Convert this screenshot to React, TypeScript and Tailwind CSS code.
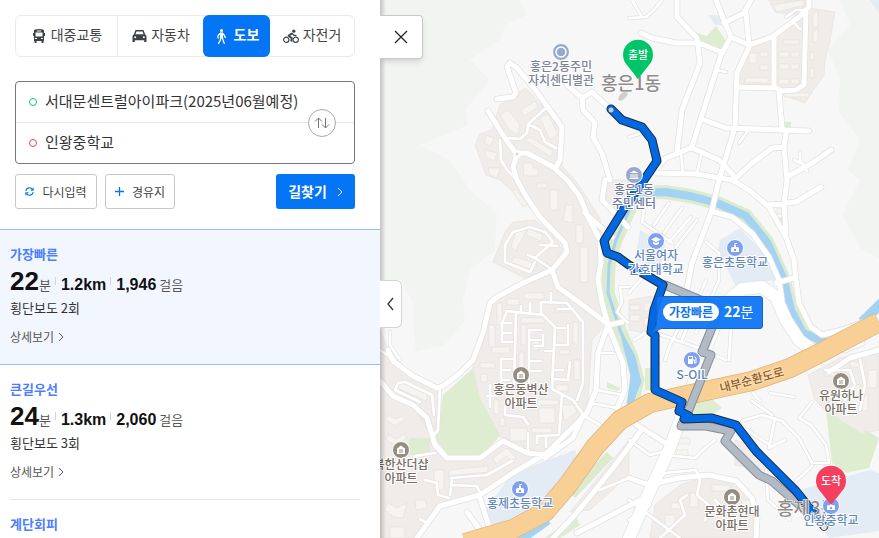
import { useState } from 'react';
import type { ReactNode } from 'react';
import clsx from 'clsx';

interface RouteDetail {
  minutes: string;
  distance: string;
  steps: string;
  crosswalks: number;
}

interface RouteOption {
  id: string;
  name: string;
  detail?: RouteDetail;
}

const routeOptions: RouteOption[] = [
  { id: 'fast', name: '가장빠른', detail: { minutes: '22', distance: '1.2km', steps: '1,946', crosswalks: 2 } },
  { id: 'main', name: '큰길우선', detail: { minutes: '24', distance: '1.3km', steps: '2,060', crosswalks: 3 } },
  { id: 'stairs', name: '계단회피' },
];

function BusIcon() {
  return (
    <svg width="12" height="14" viewBox="0 0 12 14" aria-hidden="true">
      <path d="M2 .5Q6-.5 10 .5L11 1.500V4H12V7H11V12H10.500V14H8.500V12H3.500V14H1.500V12H1V7H0V4H1V1.500z" fill="#3d4248" />
      <path d="M2.500 3.500h7v4h-7z" fill="#fff" />
      <path d="M2 9.500h2M8 9.500h2M4 2h4" stroke="#fff" />
    </svg>
  );
}

function CarIcon() {
  return (
    <svg width="15" height="12" viewBox="0 0 15 12" aria-hidden="true">
      <path d="M3.500 0h8l1.600 4.300L14.500 6v6h-2.300v-1.800H2.800V12H.5V6l1.400-1.700z" fill="#3d4248" />
      <path d="M4.400 1.500h6.200l.9 2.700h-8z" fill="#fff" />
      <circle cx="3.200" cy="7.300" r="1" fill="#fff" />
      <circle cx="11.800" cy="7.300" r="1" fill="#fff" />
    </svg>
  );
}

function WalkIcon() {
  return (
    <svg width="9" height="15" viewBox="0 0 9 15" aria-hidden="true">
      <circle cx="4.500" cy="1.500" r="1.500" fill="#fff" />
      <path d="M3.200 3.500H5.800L6.200 9.500H2.800z" fill="#fff" />
      <path
        d="M3.500 4.200L1 6.500V9M5.500 4.200L7.500 6.500 8.200 8.500M3.600 9L3.200 11.500 1.500 14.300M5.300 9L6.200 11.500 7.200 14.300"
        fill="none"
        stroke="#fff"
        strokeWidth="1.300"
        strokeLinecap="round"
      />
    </svg>
  );
}

function BikeIcon() {
  return (
    <svg width="17" height="15" viewBox="0 0 17 15" fill="none" stroke="#3d4248" aria-hidden="true">
      <circle cx="3.500" cy="11" r="2.800" strokeWidth="1.200" />
      <circle cx="13.500" cy="11" r="2.800" strokeWidth="1.200" />
      <circle cx="11.500" cy="1.800" r="1.700" fill="#3d4248" stroke="none" />
      <path d="M9.500 4L6 6.800l3.300 2.200-.6 3.800" strokeWidth="2" strokeLinejoin="round" />
      <path d="M9.500 4l2 2.300h2.800" strokeWidth="1.400" />
    </svg>
  );
}

const travelModes = [
  { key: 'transit', label: '대중교통', icon: BusIcon, width: 'w-[102px]' },
  { key: 'car', label: '자동차', icon: CarIcon, width: 'w-[85px]' },
  { key: 'walk', label: '도보', icon: WalkIcon, width: 'w-[67px]' },
  { key: 'bike', label: '자전거', icon: BikeIcon, width: 'flex-1' },
];

function ChevronRight({ className }: { className?: string }) {
  return (
    <svg className={className} width="6" height="10" viewBox="0 0 6 10" fill="none" stroke="currentColor" aria-hidden="true">
      <path d="M1 1l4 4-4 4" />
    </svg>
  );
}

function RouteStats({ detail }: { detail: RouteDetail }) {
  return (
    <>
      <div className="mt-px flex h-8 items-baseline text-[13px] leading-8 text-[#555]">
        <strong className="font-[Liberation_Sans] text-[26px] text-[#111]">{detail.minutes}</strong>
        <span>분</span>
        <i className="mr-[5px] ml-1 h-2 w-px self-center bg-[#d5d5d5]" />
        <strong className="font-[Liberation_Sans] text-[16px] text-[#111]">{detail.distance}</strong>
        <i className="mr-[5px] ml-1 h-2 w-px self-center bg-[#d5d5d5]" />
        <strong className="font-[Liberation_Sans] text-[16px] text-[#111]">{detail.steps}</strong>
        <span className="ml-[3px]">걸음</span>
      </div>
      <p className="mt-px text-[13px] leading-5 text-[#333]">횡단보도 {detail.crosswalks}회</p>
      <a href="#detail" className="mt-[9px] flex items-center gap-1 text-[12px] leading-5 text-[#555]">
        상세보기
        <ChevronRight />
      </a>
    </>
  );
}

function RouteItem({ route, selected, onSelect }: { route: RouteOption; selected: boolean; onSelect: () => void }) {
  return (
    <li
      onClick={onSelect}
      className={clsx('pr-5 pl-[10px]', selected && 'border-y border-[#8fc1f8] bg-[#f2f7ff]')}
    >
      <div className={clsx('pt-[14px]', route.detail && 'pb-[17px]', route.detail && !selected && 'border-b border-[#e5e5e5]')}>
        <h3 className="text-[13px] leading-5 font-bold text-[#4d7eff]">{route.name}</h3>
        {route.detail && <RouteStats detail={route.detail} />}
      </div>
    </li>
  );
}

function SearchPanel() {
  const [mode, setMode] = useState('walk');
  const [origin, setOrigin] = useState('서대문센트럴아이파크(2025년06월예정)');
  const [destination, setDestination] = useState('인왕중학교');
  const [selectedId, setSelectedId] = useState('fast');

  const swap = () => {
    setOrigin(destination);
    setDestination(origin);
  };

  return (
    <aside className="flex w-[380px] shrink-0 flex-col overflow-hidden bg-white">
      <div className="pt-[15px] pr-[25px] pb-5 pl-[15px]">
        <nav className="flex h-[42px] rounded-md border border-[#ebebeb]">
          {travelModes.map((item) => {
            const Icon = item.icon;
            const isActive = item.key === mode;
            return (
              <button
                key={item.key}
                type="button"
                onClick={() => setMode(item.key)}
                className={clsx(
                  '-my-px flex items-center justify-center gap-1 text-[14px]',
                  item.width,
                  item.key === 'transit' && 'border-r border-[#ebebeb]',
                  isActive ? 'rounded-md bg-[#0475f4] font-bold text-white' : 'text-[#444]',
                )}
              >
                <span className="flex w-4 justify-center"><Icon /></span>
                <span className="-mt-1">{item.label}</span>
              </button>
            );
          })}
        </nav>

        <form className="mt-6" onSubmit={(e) => e.preventDefault()}>
          <div className="relative rounded-sm border border-[#777]">
            <div className="flex h-[41px] items-center border-b border-[#e5e5e5] pl-[13px]">
              <i className="h-2 w-2 rounded-full border border-[#13c56b]" />
              <input
                aria-label="출발지"
                value={origin}
                onChange={(e) => setOrigin(e.target.value)}
                className="ml-2 h-9 w-[280px] bg-transparent pb-1 text-[15px] text-[#333] outline-none"
              />
            </div>
            <div className="flex h-10 items-center pl-[13px]">
              <i className="h-2 w-2 rounded-full border border-[#ee3f5f]" />
              <input
                aria-label="도착지"
                value={destination}
                onChange={(e) => setDestination(e.target.value)}
                className="ml-2 h-9 w-[280px] bg-transparent pb-1 text-[15px] text-[#333] outline-none"
              />
            </div>
            <button
              type="button"
              aria-label="출발지 도착지 바꾸기"
              onClick={swap}
              className="absolute top-[27px] right-[18px] flex h-7 w-7 items-center justify-center rounded-full border border-[#aaa] bg-white"
            >
              <svg width="16" height="12" viewBox="0 0 16 12" fill="none" stroke="#777">
                <path d="M4.500 11V1M1 4.500L4.500 1 8 4.500M11.500 1v10M8 7.500l3.500 3.500L15 7.500" />
              </svg>
            </button>
          </div>

          <div className="mt-[10px] flex h-[35px]">
            <button type="button" className="flex w-[82px] items-center justify-center gap-2 rounded-[3px] border border-[#c8c8c8] text-[12px] text-[#444]">
              <svg width="9" height="9" viewBox="0 0 10 10" fill="none" stroke="#0475f4" strokeWidth="1.200">
                <path d="M1 4.500A4 4 0 0 1 8.500 3M9 5.500A4 4 0 0 1 1.500 7" />
                <path d="M9 .8V3.500H6.300M1 9.200V6.500h2.700" />
              </svg>
              다시입력
            </button>
            <button type="button" className="ml-2 flex w-[70px] items-center justify-center gap-2 rounded-[3px] border border-[#c8c8c8] text-[12px] text-[#444]">
              <svg width="9" height="9" viewBox="0 0 9 9" stroke="#0475f4" strokeWidth="1.300">
                <path d="M4.500 0v9M0 4.500h9" />
              </svg>
              경유지
            </button>
            <button type="submit" className="ml-auto flex w-[79px] items-center justify-center gap-[10px] rounded-[3px] bg-[#0475f4] text-[14px] font-bold text-white">
              길찾기
              <ChevronRight />
            </button>
          </div>
        </form>
      </div>

      <ul className="min-h-0 flex-1 overflow-hidden">
        {routeOptions.map((route) => (
          <RouteItem key={route.id} route={route} selected={route.id === selectedId} onSelect={() => setSelectedId(route.id)} />
        ))}
      </ul>
    </aside>
  );
}

// Map geometry
const hills = [
  'M380 0H520L527 15 505 25 500 40 470 60 490 80 465 110 468 125 420 145 450 160 470 190 497 213 495 250 470 270 463 300 465 320 445 345 415 352 412 300 400 280H380z',
  'M879 0H840L850 25 828 50 840 80 838 110 860 140 848 170 860 180 842 215 862 250 879 258z',
];

const blocks = [
  'M500 105L526 88 562 127 562 166 575 180 600 218 604 250 602 310 606 325 592 340 588 400 580 418 545 455 500 436 478 395 473 368 490 303 552 270 567 250 540 217 500 180 486 175 475 145 480 134 492 130z',
  'M513 222L535 220 565 245 552 268 525 278 493 262 505 232z',
  'M380 330L393 361 437 388 440 410 433 440 413 405 393 396 380 381z',
  'M380 385L413 405 430 430 435 445 450 460 480 460 503 441 545 455 480 495 440 505 415 538H380z',
  'M749 47L774 38 809 8 835 12 830 40 825 60 824 75 812 92 805 103 783 95 780 91 736 87 740 65z',
  'M769 0H809L800 16 775 12z',
  'M808 375L840 358 879 350V430L862 434 826 411 815 400z',
  'M655 505L680 485 709 475 736 481 752 498 755 538H650z',
  'M629 300L660 295 655 335 629 330z',
  'M602 180L629 180 620 215 602 200z',
  'M570 512L629 440 629 475 590 510z',
  'M735 440L756 447 765 470 735 465z',
];

const parks = [
  'M473 368L480 398 500 436 480 458 450 458 435 438 443 395z',
  'M409 438H430V455H409z',
  'M697 33L707 36 716 26 727 42 721 49 700 42z',
  'M826 411L862 434 866 430 879 438 869 468 846 473 832 463z',
  'M607 382L620 388 618 391 607 388z',
  'M645 368H655V390H645z',
  'M690 401L712 399 722 408 705 420 690 416z',
  'M783 122H791V127H783z',
  'M575 515L545 538H560L580 525z',
  'M777 218L783 217 783 231 775 224z',
];

const schools = [
  'M720 240L740 228 775 265 775 280 735 285 718 250z',
  'M640 230L665 245 660 270 635 260z',
  'M485 510L513 473 575 450 580 470 547 510 520 526 490 532z',
  'M796 491L869 470 879 473V531L829 538z',
  'M708 15L720 15 724 25 715 25z',
  'M870 0H879V13z',
];

const buildings = [
  'M500 115l8-5 12 15-3 10-8-6zM521 110l14-9 3 6-14 9zM540 118l8-4 10 20-8 6zM525 140l5-3 23 14-2 6zM486 135l8 3-4 8-6-3zM485 150l12 3-3 8-8-4zM488 168l12 0-3 10-7-3z',
  'M523 163h10v5h5v8h-14z',
  'M537 183h10v5h-10zM550 190h8v20h-8zM566 205h7v18l-10-2zM576 225h7v18h-7zM580 247h8v35h-8zM517 190l10 14-4 3-12-18z',
  'M516 232l12-5-12 24-5-4zM528 228l15 7-2 6-15-6zM515 257l22 7-2 7-24-9z',
  'M507 299h12v6h-12zM524 293h20v6h-20zM497 303h5v22h-5zM489 325h6v22h-6zM521 318h24v5h-24zM521 325h5v20h-5zM555 307h18v5h-18zM573 322h5v22h-5zM492 347h18v6h-18zM519 352h5v25h-5zM560 350h10v4h-10zM574 360h6v20h-6zM532 340h7v10h-7z',
  'M480 363h15v5h-15zM481 374h6v8h-6zM494 400h5v14h-5zM505 398h14v6h-14zM538 400h20v5h-20zM539 408h16v15h-16zM562 405h12l3 7-13 9zM510 428h17v13h-17zM532 428h20v5h-20zM500 418h5v8h-5zM556 385h12v6h-12z',
  'M400 382l28 13-2 6-28-13zM388 415l8 4 5-3 4 4-10 6-9-6zM388 434l8 5 8-5 3 4-10 8-11-6zM415 500h10l2 8-11 2zM388 503l9 5 10-5-4 15-9-1-9-7zM450 470l38-4v6l-40 4zM493 458l14-10 9 10-4 3-6-5-10 8zM390 527h15v11h-15zM434 470h10v20h-10z',
  'M779 52h10v5h-10zM791 52h8v5h-8zM779 64h10v5h-10zM791 64h8v5h-8zM779 79h10v5h-10zM791 79h8v5h-8zM749 53h8v10h-8zM760 52h8v5h-8zM760 65h8v5h-8zM745 78h23v5h-23zM813 12h5v15h-5zM813 30h5v12h-5zM810 52h4v8h-4zM810 68h4v10h-4zM783 40h16v4h-16zM784 93h25v4h-25zM773 5l30-5 2 5-28 7z',
  'M825 370h10v6h-10zM850 362h15v5h-15zM868 370h9v18h-9zM850 385h10v20h-10zM835 407h14v6h-14zM862 395h6v16h-6z',
  'M671 503h12v6h-12zM690 493h8v14h-8zM665 515h10v14h-10zM742 500h9v10h-9zM712 485h18v6h-18zM675 438h15v6h-15zM672 450h16v7h-16z',
  'M630 305h10v5h-10zM644 303h12v8h-12zM630 315h10v6h-10zM644 318h10v8h-10zM777 208h8v6h-8z',
];

const minorRoads = [
  'M632 0L642 17M629 18L646 17 654 10 662 0M717 70L726 72M629 137L642 133',
  'M786 17L796 10 806 10M793 22L800 29M681 153L683 173M701 155L697 173',
  'M747 132L739 143M800 152V160L807 171M794 160L800 163',
  'M669 203L654 225M682 208L664 233M691 217L669 242M697 220L676 247M644 210L642 222 672 243',
  'M706 242L719 253 719 280 696 333M706 280L682 340M729 303L706 360M731 327L729 360M656 333L696 347 726 360M629 293L649 270M692 300L670 345',
  'M505 138L520 139 527 133 528 124 546 108M528 124L540 130 545 142 556 148',
  'M500 140L501 160 507 170 515 178',
  'M505 262V245L513 232 530 227 545 232 553 242 535 258 528 255M535 262L530 272 505 262M535 258L550 268',
  'M540 245L557 246',
  // Apartment complex around 홍은동벽산
  'M502 342V323L507 311 543 315 555 327 552 387M516 312L514 385M541 314V302L567 303 577 315 583 322V383L577 400',
  'M541 330H529V388M530 340H540M543 335V346H535M555 328H565M555 345H568V325M545 351H553M501 323H511M502 333H511M502 342H512M530 303V312M521 306V313M551 293V303M558 309H573',
  'M501 382V359H513M501 370H510M501 380H509M529 361H541M529 371H541M553 370H563M553 379L568 380 570 362M487 396H497M490 385V407M552 389L573 400 583 414M562 395L559 435 537 436V443M546 437V447M528 433V450M505 407V415L523 417 528 424',
  'M440 388L438 430 432 438M395 390L398 383 405 382 432 395 434 415M395 390L420 402M435 453L415 456 413 465 420 465',
  'M452 480L450 495M437 485L438 495 449 498M425 480L437 483M451 478L487 475 512 461M452 485L477 486 481 495M420 519L427 523',
  'M597 390L623 395M590 403L617 408M598 353H613M583 415L603 427',
  'M629 440L650 455 669 450M629 478L600 490M665 455L695 458 706 447 715 440M650 485L665 473 695 470',
  'M742 421L762 415 782 421 799 438 812 463 829 463 826 445 811 425 799 418M812 466L796 481M799 418L812 402M752 401L772 415M775 418L769 448M769 448L785 440M739 425L770 445M760 401L753 393M770 393L794 397',
  'M696 470L700 480 697 495 712 508 705 520M687 495L680 500 685 515 660 538M715 500L740 525M766 470L768 500 790 520',
  'M825 370L850 370 855 385 845 400M860 360L865 385 860 410M835 395L848 415',
  'M670 345L665 360M634 340L645 333M628 323L617 312 622 302 620 287 629 287M390 332V345L400 360',
  'M380 350L392 358M629 500L680 538M629 520L650 505',
];

const roads = [
  'M497 99L513 97 516 93 507 67 510 63 517 68 537 92 562 127 560 160 556 167',
  'M488 111L505 138 517 155 513 167 517 180 527 198 540 217 565 243 567 252 552 270 523 283 497 297 490 303 483 333 473 360 460 373 443 386 437 388 413 376 393 361 388 350',
  'M517 153L527 153 553 167 568 181 580 197 588 217 600 240 601 262 598 280 602 303 608 325',
  'M608 325L598 353 596 390 587 413 560 440 547 453 513 473 480 495 440 506 417 538',
  'M608 325L623 363 625 390 617 408M583 416L573 438 545 458',
  'M552 270L558 287 580 303 609 325',
  'M567 85L582 98 592 92 608 107M582 98L583 110 595 123 593 137 602 153 610 180',
  'M605 180L602 200 628 227M585 213L612 237',
  'M677 0V17L697 38 700 63 682 110 677 152',
  'M716 0L726 25 731 37 721 55 709 93 692 147 679 153 666 158 655 170',
  'M641 33L652 38 676 43 699 43 721 52',
  'M751 0L744 13 724 23M746 13L749 45M731 37L749 45 772 37 799 17 809 7V0',
  'M749 47L737 73 735 127 719 180M736 87L776 88 782 91 796 90 804 85 806 10M774 38V88',
  'M779 92L782 128 786 133 784 147 787 180 784 203 786 233M704 120L726 128 809 131',
  'M692 148L719 160 736 178 752 163 772 148 784 147M831 150L812 163 787 177',
  'M656 173L696 174 732 180 749 190 769 207 786 237 794 260 796 280 799 303 811 327 822 335 842 330 869 320',
  'M769 205L796 202 821 187M719 180L712 210 692 263 686 293M776 283L794 278',
  'M714 212L732 217 752 233 769 257 779 280 782 300',
  'M380 381L393 396 413 405 427 418 435 445 447 458 480 458 503 441 527 453 547 455',
  'M609 325L622 322',
  'M553 538L575 515 613 468 640 432M480 498L490 530M467 512L480 530M577 533L640 500',
  'M629 478L649 485 679 478 709 475 736 481 752 498 757 518 756 538',
  'M629 420L670 446M845 350L862 343M829 372L850 358 879 350',
  'M736 425L770 465 800 500',
];

const wideRoads = [
  'M725 303L742 289 762 287 776 297 786 320 799 340 812 350',
  'M629 538L648 495 669 450 682 415 700 365',
];

const highway = 'M465 543L513 529 545 512 568 485 595 447 620 420 650 403 696 393 752 381 790 368 822 352 879 322';
const riverArc = 'M632 201L645 193 665 192 690 196 717 203 746 216 767 242 784 280 791 310 803 333 826 342';
const riverWest = 'M634 200L616 240 609 265 608 293 620 330 632 358 638 380 632 405';

const fastPath = 'M611 109L622 120 642 127 652 140 657 161 644 180 625 207 604 241 607 253 618 257 629 265 663 285 654 310 651 332 655 335 655 390 682 402 679 411 689 416 684 419 712 418 736 425 756 451 796 491 824 526';
const mainPath = 'M665 285L717 307 715 320 702 352 711 355 708 362 688 412 681 426 706 426 731 431 725 441 745 461 759 475 772 481 796 502 812 516';

type PoiKind = 'office' | 'bank' | 'college' | 'school' | 'gas' | 'apt';

interface Poi {
  kind: PoiKind;
  x: number;
  y: number;
  lines: string[];
}

const pois: Poi[] = [
  { kind: 'office', x: 561, y: 52, lines: ['홍은2동주민', '자치센터별관'] },
  { kind: 'bank', x: 634, y: 175, lines: ['홍은1동', '주민센터'] },
  { kind: 'college', x: 656, y: 241, lines: ['서울여자', '간호대학교'] },
  { kind: 'school', x: 735, y: 248, lines: ['홍은초등학교'] },
  { kind: 'gas', x: 692, y: 360, lines: ['S-OIL'] },
  { kind: 'apt', x: 521, y: 375, lines: ['홍은동벽산', '아파트'] },
  { kind: 'apt', x: 841, y: 381, lines: ['유원하나', '아파트'] },
  { kind: 'apt', x: 401, y: 450, lines: ['북한산더샵', '아파트'] },
  { kind: 'school', x: 520, y: 489, lines: ['홍제초등학교'] },
  { kind: 'apt', x: 732, y: 497, lines: ['문화촌현대', '아파트'] },
  { kind: 'school', x: 831, y: 506, lines: ['인왕중학교'] },
];

const poiColors: Record<PoiKind, { disc: string; text: string }> = {
  office: { disc: '#98a8cc', text: '#7b8499' },
  bank: { disc: '#98a8cc', text: '#6b799d' },
  college: { disc: '#7fa0ec', text: '#6286ba' },
  school: { disc: '#7fa0ec', text: '#6286ba' },
  gas: { disc: '#7fa0ec', text: '#6286ba' },
  apt: { disc: '#968d82', text: '#776d63' },
};

const poiGlyphs: Record<PoiKind, ReactNode> = {
  office: (
    <>
      <circle r="5" fill="none" stroke="#fff" strokeWidth="1.500" />
    </>
  ),
  bank: (
    <>
      <path d="M-4.500 -2L0 -4.500 4.500 -2z" fill="#fff" />
      <path d="M-3 -1V3M-1 -1V3M1 -1V3M3 -1V3M-4.500 3.500H4.500" stroke="#fff" />
    </>
  ),
  college: (
    <>
      <path d="M-5 -1.500L0 -4 5 -1.500 0 1z" fill="#fff" />
      <path d="M-3 0.500L0 2 3 0.500V3L0 4-3 3z" fill="#fff" />
    </>
  ),
  school: (
    <>
      <path d="M-4 -0.500L-1 -1V-2.500L0 -3 1 -2.500V-1L4 -0.500V4H-4z" fill="#fff" />
      <path d="M0 -5V-2M0 -4.500H2" stroke="#fff" />
      <path d="M-1 1H1V3H-1z" fill="#7fa0ec" />
    </>
  ),
  gas: (
    <>
      <path d="M-4 -4H1V4H-4z" fill="#fff" />
      <path d="M-3 -3H0V-1H-3z" fill="#7fa0ec" />
      <path d="M1 0H2.500V3H4V-2L2.500 -3.500" fill="none" stroke="#fff" />
    </>
  ),
  apt: (
    <>
      <path d="M-4 -1.500L0 -4.500 4 -1.500V4H-4z" fill="#fff" />
      <path d="M-2 0H2M-2 2H2" stroke="#968d82" />
    </>
  ),
};

function PoiMarker({ poi }: { poi: Poi }) {
  const colors = poiColors[poi.kind];
  return (
    <g>
      <circle cx={poi.x} cy={poi.y} r="8.500" fill={colors.disc} stroke="#fff" />
      <g transform={`translate(${poi.x} ${poi.y})`}>{poiGlyphs[poi.kind]}</g>
      {poi.lines.map((line, i) => (
        <text
          key={line}
          x={poi.x}
          y={poi.y + 19 + i * 14}
          textAnchor="middle"
          fill={colors.text}
          className="stroke-white stroke-2 text-[12px] font-medium [paint-order:stroke]"
        >
          {line}
        </text>
      ))}
    </g>
  );
}

function Pin({ x, y, color, label }: { x: number; y: number; color: string; label: string }) {
  return (
    <g transform={`translate(${x} ${y})`}>
      <path d="M0 24L-11 10A15 15 0 1 1 11 10z" fill={color} />
      <text y="4" textAnchor="middle" fill="#fff" className="text-[11px] font-medium">
        {label}
      </text>
    </g>
  );
}

function MapCanvas() {
  return (
    <svg
      className="absolute inset-0 h-full w-full"
      viewBox="380 0 499 538"
      preserveAspectRatio="xMinYMin slice"
      role="img"
      aria-label="지도"
    >
      <path d="M380 0H879V538H380z" fill="#f7f7f7" />
      <path d={hills.join('')} fill="#f2f4f2" />
      <path d={blocks.join('')} fill="#f0ece9" stroke="#e7e2dd" strokeWidth="0.700" />
      <path d={parks.join('')} fill="#deedd0" />
      <path d={schools.join('')} fill="#e3ebf4" />
      <path d={buildings.join('')} fill="#f6f4f1" stroke="#e6e1db" strokeWidth="0.700" />

      {/* Stream with its green banks */}
      <g fill="none" strokeLinejoin="round">
        <path d={riverWest} stroke="#dcebcd" strokeWidth="13" />
        <path d={riverArc} stroke="#dcebcd" strokeWidth="14" />
        <path d={riverWest} stroke="#a3d2f3" strokeWidth="3" />
        <path d="M622 335L634 357 640 382 628 410 629 400 632 375z" fill="#a3d2f3" stroke="#a3d2f3" strokeWidth="3" />
        <path d={riverArc} stroke="#a3d2f3" strokeWidth="8" />
        <path d="M885 300L862 322" stroke="#a3d2f3" strokeWidth="10" />
        <path d="M548 520L520 540" stroke="#a3d2f3" strokeWidth="9" />
        <path d="M572 495L610 455" stroke="#dcebcd" strokeWidth="9" />
      </g>

      {/* Road casings first, then the white fill */}
      <g fill="none" stroke="#e2e1e0" strokeLinecap="round" strokeLinejoin="round">
        <path d={minorRoads.join('')} strokeWidth="4" />
        <path d={roads.join('')} strokeWidth="6.500" />
        <path d={wideRoads.join('')} strokeWidth="13.500" />
      </g>
      <g fill="none" stroke="#fff" strokeLinecap="round" strokeLinejoin="round">
        <path d={minorRoads.join('')} strokeWidth="2.700" />
        <path d={roads.join('')} strokeWidth="5" />
        <path d={wideRoads.join('')} strokeWidth="12" />
      </g>
      <circle cx="517" cy="154" r="4" fill="#fff" />
      <circle cx="517" cy="154" r="1.500" fill="#ddd8cf" />

      <path d={highway} fill="none" stroke="#dfb27c" strokeWidth="20" strokeLinejoin="round" />
      <path d={highway} fill="none" stroke="#f8d096" strokeWidth="18.500" strokeLinejoin="round" />
      <text
        transform="translate(753 384) rotate(-15)"
        textAnchor="middle"
        fill="#8a5a24"
        className="stroke-[#fbe0b8] stroke-2 text-[12px] font-medium [paint-order:stroke]"
      >
        내부순환도로
      </text>

      <ellipse cx="623" cy="96" rx="6" ry="3" transform="rotate(-45 623 96)" fill="#cfcfcf" />

      <g fill="none" strokeLinejoin="round" strokeLinecap="round">
        <path d={mainPath} stroke="#858f9b" strokeWidth="9" />
        <path d={mainPath} stroke="#b1bac5" strokeWidth="7" />
        <path d={fastPath} stroke="#1f2c40" strokeWidth="9" />
        <path d={fastPath} stroke="#0068e1" strokeWidth="7" />
      </g>
      <circle cx="611" cy="110" r="2.500" fill="#c9ccd0" />
      <circle cx="824" cy="527" r="3.500" fill="#e4e4e4" stroke="#555" />

      <g fill="#8f8b8b" textAnchor="middle" className="stroke-white stroke-1 text-[18px] font-medium [paint-order:stroke]">
        <text x="631" y="90">홍은1동</text>
        <text x="807" y="515">홍제3동</text>
      </g>

      {pois.map((poi) => (
        <PoiMarker key={poi.lines.join('')} poi={poi} />
      ))}

      <Pin x={638} y={55} color="#00c568" label="출발" />
      <Pin x={831} y={481} color="#f43f5e" label="도착" />

      {/* Callout on the fastest route */}
      <g>
        <path
          d="M659 296.500H760Q762.500 296.500 762.500 299V326Q762.500 328.500 760 328.500H661L651 334 656.500 324V299Q656.500 296.500 659 296.500z"
          fill="#0f76f5"
          fillOpacity="0.950"
          stroke="#1a65c4"
        />
        <rect x="663" y="303" width="56" height="18" rx="9" fill="#fff" />
        <text x="691" y="317" textAnchor="middle" fill="#0f75f2" className="text-[12px] font-bold">
          가장빠른
        </text>
        <text x="724" y="317" fill="#fff" className="text-[14px]">
          <tspan className="font-bold">22</tspan>분
        </text>
      </g>
    </svg>
  );
}

export default function App() {
  return (
    <div className="flex h-screen overflow-hidden font-['Noto_Sans_CJK_KR',sans-serif]">
      <SearchPanel />
      <main className="relative min-w-0 flex-1 overflow-hidden">
        <MapCanvas />
        <div className="absolute inset-y-0 left-0 w-[6px] bg-linear-to-r from-black/20 to-transparent" />
        <button
          type="button"
          aria-label="닫기"
          className="absolute top-[15px] left-0 flex h-11 w-[43px] items-center justify-center rounded-r-sm border border-l-0 border-[#c9c9c9] bg-white shadow-md"
        >
          <svg width="14" height="14" viewBox="0 0 14 14" stroke="#222" strokeWidth="1.300">
            <path d="M1 1l12 12M13 1L1 13" />
          </svg>
        </button>
        <button
          type="button"
          aria-label="패널 접기"
          className="absolute top-[280px] left-0 flex h-12 w-[22px] items-center justify-center rounded-r-md border border-l-0 border-[#d5d5d5] bg-white"
        >
          <svg width="7" height="14" viewBox="0 0 7 14" fill="none" stroke="#333" strokeWidth="1.300">
            <path d="M6 1L1 7l5 6" />
          </svg>
        </button>
      </main>
    </div>
  );
}
